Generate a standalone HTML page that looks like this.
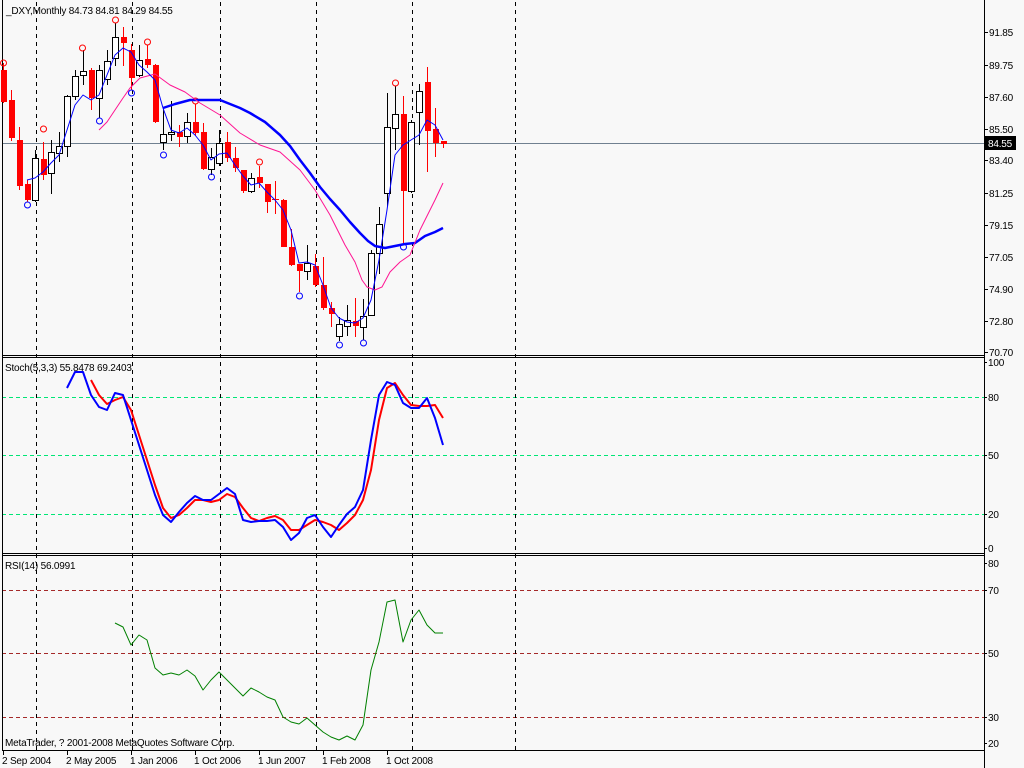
<!DOCTYPE html>
<html><head><meta charset="utf-8"><style>
html,body{margin:0;padding:0;background:#f8f8f8;overflow:hidden}
svg{display:block}
text{font-family:"Liberation Sans",sans-serif;font-size:10px;letter-spacing:-0.2px;fill:#000}
</style></head><body>
<svg id="s" width="1024" height="768" xmlns="http://www.w3.org/2000/svg">
<rect width="1024" height="768" fill="#f8f8f8"/>
<g id="g"></g>
<text x="6" y="14">_DXY,Monthly  84.73 84.81 84.29 84.55</text>
<text x="5" y="371">Stoch(5,3,3) 55.8478 69.2403</text>
<text x="5" y="569">RSI(14) 56.0991</text>
<text x="5" y="746">MetaTrader, ? 2001-2008 MetaQuotes Software Corp.</text>
</svg>
<script>
var g=document.getElementById('g'),h='';
function L(x1,y1,x2,y2,c,w,d){h+='<line x1="'+x1+'" y1="'+y1+'" x2="'+x2+'" y2="'+y2+'" stroke="'+c+'" stroke-width="'+(w||1)+'"'+(d?' stroke-dasharray="'+d+'"':'')+'/>';}
function P(pts,c,w){h+='<polyline fill="none" stroke="'+c+'" stroke-width="'+w+'" stroke-linejoin="round" points="'+pts+'"/>';}
[397,455,514].forEach(function(y){L(2,y+0.5,984,y+0.5,'#00e676',1,'4,3')});
[590,653,717].forEach(function(y){L(2,y+0.5,984,y+0.5,'#a52a2a',1,'4,3')});
[36,132,220,316,412,515].forEach(function(x){L(x+0.5,2,x+0.5,750,'#000',1,'4,4')});
L(2,143.5,984,143.5,'#708090',1);
L(2.5,0,2.5,750,'#000');L(984.5,0,984.5,768,'#000');
L(2,355.5,984,355.5,'#000');L(2,357.5,984,357.5,'#000');
L(2,553.5,984,553.5,'#000');L(2,555.5,984,555.5,'#000');
L(2,750.5,984,750.5,'#000');
var C=[[3,70,102,63,103],[11,100,138,90,141],[19,140,186,127,190],[27,184,200,180,202],[35,200,158,150,202],[43,159,175,142,180],[51,173,152,140,194],[59,153,146,132,162],[67,146,96,95,157],[75,96,76,70,100],[83,75,71,50,85],[91,70,98,68,110],[99,98,70,65,118],[107,79,61,50,85],[115,58,37,23,66],[123,37,43,27,66],[131,50,78,44,90],[139,75,60,45,77],[147,59,65,45,68],[155,65,122,64,123],[163,142,134,107,150],[171,134,132,101,141],[179,132,137,125,147],[187,136,122,113,143],[195,122,133,104,136],[203,132,169,123,170],[211,169,157,148,175],[219,163,143,130,166],[227,142,158,132,162],[235,158,168,147,172],[243,170,191,170,193],[251,191,178,173,193],[259,177,183,166,188],[267,184,202,184,213],[275,199,199,181,214],[283,200,247,199,247],[291,247,265,229,266],[299,264,271,264,292],[307,271,263,245,280],[315,266,285,254,287],[323,285,308,257,310],[331,308,314,302,327],[339,336,324,317,341],[347,326,320,305,336],[355,321,326,298,337],[363,327,316,299,340],[371,315,253,250,316],[379,253,224,207,274],[387,193,127,93,207],[395,128,114,86,150],[403,114,191,96,244],[411,191,122,120,193],[419,112,91,84,145],[427,82,131,67,172],[435,129,143,108,157],[443,141,144,141,148]];
C.forEach(function(c){var x=c[0],o=c[1],cl=c[2],up=cl<o,t=Math.min(o,cl),b=Math.max(o,cl);
var col=up?'#000':'#ff0000';L(x+0.5,c[3],x+0.5,c[4],col);
if(b-t<1){L(x-3,t+0.5,x+4,t+0.5,col);}
else if(up)h+='<rect x="'+(x-2.5)+'" y="'+(t+0.5)+'" width="6" height="'+(b-t)+'" fill="#fff" stroke="#000"/>';
else h+='<rect x="'+(x-2)+'" y="'+t+'" width="6" height="'+(b-t)+'" fill="#ff0000"/>';});
[[3,63,'r'],[43,129,'r'],[82,48,'r'],[115,20,'r'],[147,42,'r'],[195,101,'r'],[259,162,'r'],[395,83,'r'],[27,205,'b'],[99,121,'b'],[131,93,'b'],[163,155,'b'],[211,177,'b'],[299,296,'b'],[339,345,'b'],[363,343,'b'],[403,247,'b']].forEach(function(c){
h+='<circle cx="'+(c[0]+0.5)+'" cy="'+c[1]+'" r="3" fill="none" stroke="'+(c[2]=='r'?'#ff0000':'#0000ff')+'"/>';});
P('163,108 175,104 190,100 220,100 240,108 250,113 265,122 280,135 290,146 300,160 310,173 320,187 330,199 340,210 350,222 360,233 368,241 375,246 385,248 395,246 405,244 415,243 425,236 435,232 443,228','#0000ff',2.5);
P('99,130 107,122 115,110 123,98 130,88 140,78 155,74 170,85 185,92 200,103 220,115 240,133 260,145 280,152 300,170 315,190 330,215 345,245 355,262 362,280 367,287 375,290 382,287 390,272 400,262 410,255 420,230 435,200 443,183','#ff1493',1);
P('27,180 35,178 43,172 51,163 59,155 67,130 75,105 83,95 91,100 99,95 107,75 115,55 123,48 131,52 139,65 147,72 155,80 163,108 171,130 179,133 187,128 195,135 203,145 211,160 219,154 227,153 235,165 243,176 251,185 259,183 267,192 275,200 283,210 291,230 299,263 307,262 315,265 323,285 331,308 339,318 347,322 355,323 363,318 371,300 379,260 387,210 395,155 403,145 411,140 419,135 427,120 435,125 443,140','#0000ff',1);
P('91,380 99,395 107,404 115,400 123,397 131,410 139,435 147,460 155,485 163,508 171,518 179,515 187,508 195,500 203,500 211,502 219,500 227,494 235,497 243,508 251,518 259,521 267,518 275,516 283,520 291,530 299,530 307,525 315,520 323,522 331,525 339,530 347,523 355,515 363,500 371,470 379,420 387,388 395,383 403,395 411,405 419,406 427,406 435,405 443,418','#ff0000',2);
P('67,388 75,372 83,372 91,395 99,407 107,410 115,393 123,395 131,420 139,445 147,470 155,495 163,515 171,522 179,512 187,503 195,496 203,500 211,500 219,494 227,488 235,494 243,520 251,522 259,521 267,521 275,520 283,527 291,540 299,533 307,518 315,515 323,527 331,537 339,525 347,514 355,507 363,490 371,440 379,395 387,382 395,385 403,403 411,408 419,408 427,398 435,418 443,445','#0000ff',2);
P('115,623 123,627 131,645 139,635 147,640 155,668 163,675 171,673 179,675 187,670 195,676 203,690 211,680 219,672 227,680 235,688 243,696 251,688 259,692 267,697 275,700 283,717 291,722 299,724 307,718 315,725 323,732 331,737 339,740 347,736 355,740 363,725 371,670 379,642 387,602 395,600 403,642 411,620 419,610 427,625 435,633 443,633','#008000',1);
function T(x,y,s){h+='<text x="'+x+'" y="'+y+'">'+s+'</text>';}
[['91.85',32],['89.75',65],['87.60',97],['85.50',129],['83.40',160],['81.25',193],['79.15',225],['77.05',257],['74.90',289],['72.80',321],['70.70',352]].forEach(function(a){L(984,a[1]+0.5,988,a[1]+0.5,'#000');T(989,a[1]+4,a[0]);});
h+='<rect x="985" y="136" width="31" height="14" fill="#000"/><text x="988" y="147" style="fill:#fff">84.55</text>';
[['100',362],['80',397],['50',455],['20',514],['0',548]].forEach(function(a){L(984,a[1]+0.5,987,a[1]+0.5,'#000');T(988,a[1]+4,a[0]);});
[['80',563],['70',590],['50',653],['30',717],['20',743]].forEach(function(a){L(984,a[1]+0.5,987,a[1]+0.5,'#000');T(988,a[1]+4,a[0]);});
[['2 Sep 2004',3],['2 May 2005',67],['1 Jan 2006',131],['1 Oct 2006',195],['1 Jun 2007',259],['1 Feb 2008',323],['1 Oct 2008',387]].forEach(function(a){L(a[1]+0.5,750,a[1]+0.5,755,'#000');T(a[1]-1,764,a[0]);});
g.innerHTML=h;
</script>
</body></html>
